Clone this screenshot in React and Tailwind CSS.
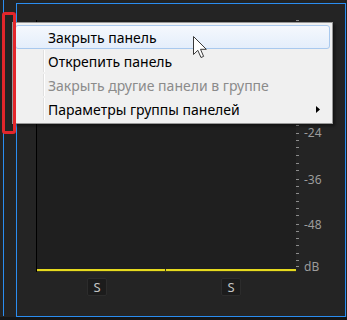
const blue = 'bg-[#2b8df0]'

const ticks = [
  20, 27.5, 35, 42.5, 50, 57.5, 65, 72.5, 80, 87.5, 95, 102.5, 110, 117.5, 125.3,
  132.7, 140, 147.3, 155, 162.7, 170, 179.3, 186, 193.3, 200.7, 208, 215.3, 224,
  230.7, 238, 245.3, 253.3, 260, 266,
]

const labels = [
  { y: 132.7, t: '-24' },
  { y: 179.3, t: '-36' },
  { y: 224, t: '-48' },
  { y: 266, t: 'dB' },
]

const METER_TOP = 20

function Scale() {
  return (
    <svg width="48" height="258" className="-mb-[6px] block shrink-0 overflow-visible">
      {ticks.map((y) => (
        <rect key={y} x="0" y={Math.round(y - METER_TOP)} width="3" height="1" fill="#8c8c8c" />
      ))}
      {labels.map((l) => (
        <text
          key={l.t}
          x="8"
          y={l.y - METER_TOP + 4.5}
          fontSize="12"
          fill="#9c9c9c"
          fontFamily="'Noto Sans', sans-serif"
        >
          {l.t}
        </text>
      ))}
    </svg>
  )
}

function SoloButton({ className }) {
  return (
    <div
      className={`flex h-[18px] w-[20px] items-center justify-center rounded-[2px] border border-[#2c2c2c] bg-[#1c1c1c] text-[13px] leading-none text-[#c4c4c4] ${className}`}
    >
      S
    </div>
  )
}

function MenuItem({ label, active, disabled, sub }) {
  return (
    <div
      className={`flex h-[24px] items-center rounded-[3px] border ${
        active ? 'border-[#a9c9ee] bg-gradient-to-b from-[#f5f8fd] to-[#e4eefb]' : 'border-transparent'
      }`}
    >
      <div className={`h-full w-[28px] shrink-0 ${active ? '' : 'border-r border-r-[#e0e0e0]'}`} />
      <div className={`h-full w-px shrink-0 ${active ? '' : 'bg-white'}`} />
      <span className={`pl-[3px] ${disabled ? 'text-[#8b8b8b]' : 'text-black'}`}>{label}</span>
      {sub && (
        <svg width="4" height="7" className="ml-auto mr-[9px]">
          <path d="M0 0 L4 3.5 L0 7 Z" fill="#000" />
        </svg>
      )}
    </div>
  )
}

function Cursor() {
  return (
    <svg width="15" height="24" viewBox="0 0 15 24" className="absolute left-[193px] top-[36px]">
      <path
        d="M0.5 0.5 L0.5 18.5 L4.8 14.3 L8 21.5 L10.6 20.4 L7.5 13.3 L13.3 13.3 Z"
        fill="#fff"
        stroke="#3a3a3a"
        strokeWidth="1"
      />
    </svg>
  )
}

export default function App() {
  return (
    <div className="relative h-[320px] w-[347px] overflow-hidden bg-[#161616] font-['Noto_Sans',sans-serif]">
      <div className="flex h-[317px] bg-[#232323]">
        <div className="w-[16px] shrink-0 pl-[3px]">
          <div className={`h-[316px] w-px ${blue}`} />
        </div>
        <div className="mt-[3px] h-[314px] w-[330px] shrink-0 border border-[#2b8df0] bg-[#242424]">
          <div className="h-[16px]" />
          <div className="flex">
            <div className="ml-[19px] flex h-[252px] w-[260px] flex-col border-l border-black bg-[#1f1f1f]">
              <div className="flex-1" />
              <div className="relative h-[2px] bg-[#e6da1e]">
                <div className="absolute left-[128px] top-0 h-[2px] w-px bg-[#3a3a20]" />
              </div>
              <div className="h-px bg-[#3c3a1c]" />
            </div>
            <Scale />
          </div>
          <div className="mt-[6px] flex">
            <SoloButton className="ml-[70px]" />
            <SoloButton className="ml-[114px]" />
          </div>
        </div>
      </div>

      <div className="absolute left-[12px] top-[22px] w-[321px] border border-[#979797] bg-[#f0f0f0] p-[2px] text-[14px] shadow-[2px_2px_3px_rgba(0,0,0,0.45)]">
        <MenuItem label="Закрыть панель" active />
        <MenuItem label="Открепить панель" />
        <MenuItem label="Закрыть другие панели в группе" disabled />
        <MenuItem label="Параметры группы панелей" sub />
      </div>

      <div className="absolute left-[2px] top-[12px] h-[122px] w-[14px] rounded-[3px] border-[3px] border-[#e3262b]" />

      <Cursor />
    </div>
  )
}
